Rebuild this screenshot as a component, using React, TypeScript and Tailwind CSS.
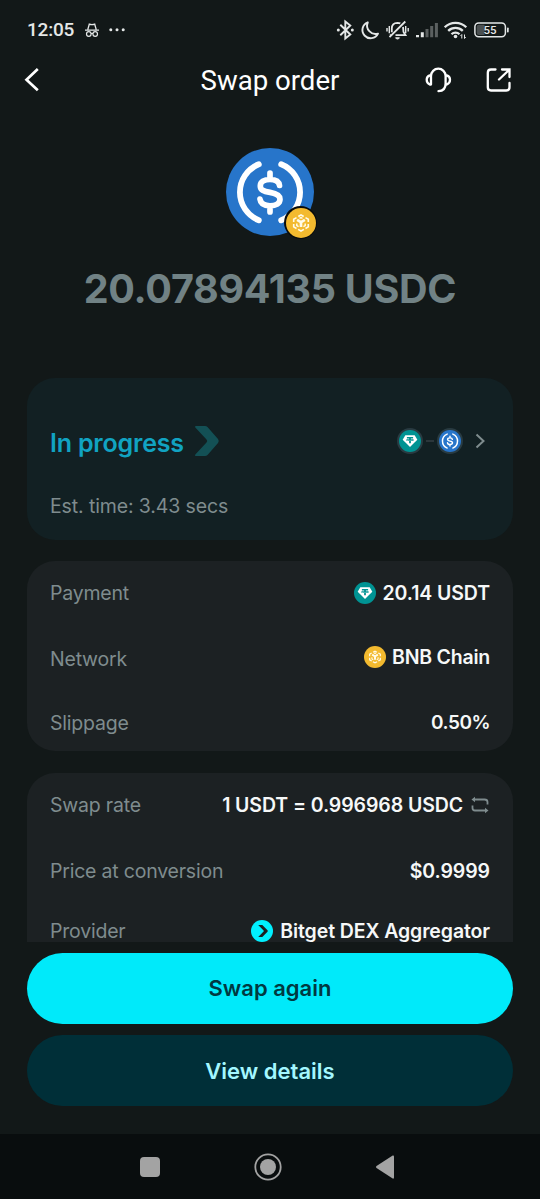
import type { ReactNode } from "react";

function UsdcIcon({ className }: { className: string }) {
  return (
    <svg viewBox="0 0 88 88" className={className} fill="none">
      <circle cx="44" cy="44" r="44" fill="#2775ca" />
      <path
        d="M32.800 16.300A30.200 30.200 0 0 0 32.800 72.300M55.200 16.300A30.200 30.200 0 0 1 55.200 72.300"
        stroke="#fff"
        strokeWidth="5.800"
        strokeLinecap="round"
      />
      <path
        d="M44 25V31M44 58V64M53.500 37.500C53 33.500 49.500 31.500 44 31.500C38 31.500 34.300 33.800 34.300 37.900C34.300 42 37.500 43.300 44 44.400C50.500 45.500 54 47 54 51.300C54 55.500 50 57.800 44 57.800C38 57.800 34.500 55.300 34 51.200"
        stroke="#fff"
        strokeWidth="5.700"
        strokeLinecap="round"
      />
    </svg>
  );
}

function UsdtIcon({ className }: { className: string }) {
  return (
    <svg viewBox="0 0 22 22" className={className}>
      <circle cx="11" cy="11" r="11" fill="#009393" />
      <path d="M6.300 5.200H15.700L18.300 9.800L11 17.100L3.700 9.800Z" fill="#fff" />
      <path d="M7.900 6.900H14.100V8.500H11.900V9C13.700 9.100 15 9.500 15 10S13.700 10.900 11.900 11V13.200H10.100V11C8.300 10.900 7 10.500 7 10S8.300 9.100 10.100 9V8.500H7.900Z" fill="#009393" />
      <path d="M8.200 10C9.500 10.400 12.500 10.400 13.800 10C12.900 9.700 12 9.700 11.900 9.700V10.100H10.100V9.700C10 9.700 9.100 9.700 8.200 10Z" fill="#fff" />
    </svg>
  );
}

function BnbIcon({ className }: { className: string }) {
  return (
    <svg viewBox="0 0 30 30" className={className} fill="none">
      <circle cx="15" cy="15" r="15" fill="#f3ba2f" />
      <path
        d="M12.300 8.500L15 7L17.700 8.500M19.500 9.600L22.300 11.200V14M22.300 16V18.900L19.500 20.500M17.900 21.400L15 23L12.100 21.400M10.500 20.500L7.700 18.900V16M7.700 14V11.200L10.500 9.600"
        stroke="#fffbe9"
        strokeWidth="1.600"
      />
      <path
        d="M11.100 11.900L15 14.200L18.900 11.900M15 14.200V18.900"
        stroke="#fffbe9"
        strokeWidth="2.700"
      />
      <path
        d="M10.800 15.500V17.600L12.600 18.700M19.200 15.500V17.600L17.400 18.700M13.500 10.300L15 9.500L16.500 10.300"
        stroke="#fffbe9"
        strokeWidth="1.500"
      />
    </svg>
  );
}

function BitgetIcon({ className }: { className: string }) {
  return (
    <svg viewBox="0 0 22 22" className={className}>
      <circle cx="11" cy="11" r="11" fill="#00f0ff" />
      <path d="M7.200 5H11.300L16.500 10.300Q17.100 11 16.500 11.700L11.300 17H7.200L12.600 11.500Q13 11 12.600 10.500Z" fill="#1b2023" />
    </svg>
  );
}

function StatusBar() {
  return (
    <div className="flex h-[60px] items-center pl-[27px] text-[#e4e7e7]">
      <span className="w-[58px] font-[Roboto] text-[19px] leading-6 font-medium tracking-[-0.200px] text-[#e4e7e7]">12:05</span>
      <svg viewBox="85 23 14 14" className="h-[14px] w-[14px]" fill="none" stroke="currentColor">
        <path d="M85 30.200H99M87.800 29.500L89.300 24.200Q92 25.200 94.700 24.200L96.200 29.500" strokeWidth="1.300" />
        <circle cx="88.800" cy="34" r="2.300" strokeWidth="1.200" />
        <circle cx="95.200" cy="34" r="2.300" strokeWidth="1.200" />
        <path d="M91 33.500H93" />
      </svg>
      <svg viewBox="108 27 18 6" className="ml-[9px] h-[6px] w-[18px]" fill="currentColor">
        <circle cx="110.800" cy="29.800" r="1.500" />
        <circle cx="117" cy="29.800" r="1.500" />
        <circle cx="123.200" cy="29.800" r="1.500" />
      </svg>
      <svg viewBox="336 19 176 22" className="ml-[210px] h-[22px] w-[176px]" fill="none" stroke="currentColor" strokeWidth="1.900">
        <path d="M340.300 24.800L350.300 34.500L345.300 38.500V21.500L350.300 25.500L340.300 35.200" />
        <circle cx="338.300" cy="30" r="1.500" fill="currentColor" stroke="none" />
        <circle cx="352.300" cy="30" r="1.500" fill="currentColor" stroke="none" />
        <path d="M367.800 22.300A8.200 8.200 0 1 0 378 33.600A8.400 8.400 0 0 1 367.800 22.300Z" strokeLinejoin="round" />
        <path d="M391.800 32.300V28.500C391.800 24.800 394 22.900 397.500 22.800C398.800 22.800 399.600 23 400.300 23.400M403 27C403.300 29 403.300 30.500 403.500 32L405.500 35.200H395.500M405.300 21.500L389.500 37.200M389.800 35.200H391.500" strokeWidth="1.800" />
        <path d="M395.500 37.800H399.500Q398.800 39 397.500 39T395.500 37.800Z" fill="currentColor" strokeWidth="1" />
        <path d="M389.300 26V33.200M387 28V31.500M405.700 26V33.200M408.200 28V31.500" strokeWidth="1.400" />
        <g stroke="none" fill="currentColor">
          <path d="M416 35h3v2.300h-3zM420.800 32.300h3v5h-3z" />
          <path d="M425.500 29h3v8.300h-3zM430.200 26h3v11.300h-3zM434.900 23h3v14.300h-3z" opacity=".35" />
        </g>
        <path d="M444.700 27.200A15.500 15.500 0 0 1 466.300 27.200M448.200 30.900A10.400 10.400 0 0 1 462.800 30.900M451.500 34.200A5.700 5.700 0 0 1 459.500 34.200" strokeWidth="2.300" />
        <circle cx="455.500" cy="36.500" r="1.800" fill="currentColor" stroke="none" />
        <path d="M461.800 38.500V34.500L460.500 35.800M464.500 34.500V38.500L465.800 37.200" strokeWidth="1" />
        <rect x="474.900" y="23" width="30.500" height="13.800" rx="3.800" strokeWidth="1.500" />
        <path d="M479 24.800H484.500V35H479Q476.700 35 476.700 32.700V27Q476.700 24.800 479 24.800Z" fill="#4b5051" stroke="none" />
        <rect x="507" y="27.500" width="1.700" height="5" rx=".8" fill="currentColor" stroke="none" />
        <text x="490" y="34.200" textAnchor="middle" fill="currentColor" stroke="none" fontFamily="Roboto, sans-serif" fontSize="11.500" fontWeight="500">55</text>
      </svg>
    </div>
  );
}

function Header() {
  return (
    <header className="grid h-[42px] grid-cols-[1fr_160px_1fr] items-center pr-[28px] pl-[24px] text-white">
      <svg viewBox="24 67 16 26" className="-mt-[3px] h-[26px] w-[16px]" fill="none" stroke="currentColor" strokeWidth="2.700">
        <path d="M37.800 69L26.500 79.700L37.800 90.300" />
      </svg>
      <h1 className="ml-[4px] text-center font-[Roboto] text-[27.600px] leading-8 font-normal whitespace-nowrap">Swap order</h1>
      <div className="flex items-center justify-end gap-[34px]">
        <svg viewBox="425 66 27 28" className="-mt-[2px] h-[28px] w-[27px]" fill="none" stroke="currentColor" strokeWidth="2.300" strokeLinecap="round">
          <path d="M431 84.500V76A7.300 7.300 0 0 1 445.600 76V83.500Q445.600 91 438.500 91.200M431 75.300H429.800Q426.700 76.300 426.700 79.800T429.800 84.500H431M445.600 75.300H446.800Q450 76.300 450 79.800T446.800 84.500H445.600" />
        </svg>
        <svg viewBox="486 67 26 26" className="-mt-[2px] h-[26px] w-[26px]" fill="none" stroke="currentColor" strokeWidth="2.300" strokeLinecap="round">
          <path d="M495.500 69.500H491Q487.800 69.500 487.800 72.700V87.300Q487.800 90.500 491 90.500H506.300Q509.500 90.500 509.500 87.300V83M502 69.500H509.500V77M509 70L499 79.500" />
        </svg>
      </div>
    </header>
  );
}

function Row({ label, children, className }: { label: string; children: ReactNode; className: string }) {
  return (
    <div className={`flex items-center justify-between leading-6 ${className}`}>
      <span className="text-[19.500px] tracking-[-0.210px] text-[#7f8c8e]">{label}</span>
      <div className="flex items-center text-[19.500px] font-semibold tracking-[-0.100px] text-[#f6f8f8]">{children}</div>
    </div>
  );
}

export default function App() {
  return (
    <main className="flex h-[1199px] w-[540px] flex-col overflow-hidden bg-[#121818] font-[Inter,sans-serif]">
      <StatusBar />
      <Header />

      <section className="flex h-[276px] flex-col items-center pt-[46px]">
        <div className="relative h-[88px] w-[88px]">
          <UsdcIcon className="h-[88px] w-[88px]" />
          <div className="absolute top-[58px] left-[58px] rounded-full bg-[#080b0c] p-[1.500px]">
            <BnbIcon className="h-[30px] w-[30px]" />
          </div>
        </div>
        <p className="mt-[29px] text-[39.500px] leading-[48px] font-bold tracking-[-0.270px] whitespace-nowrap text-[#718285]">20.07894135 USDC</p>
      </section>

      <section className="mx-[27px] h-[162px] shrink-0 rounded-[28px] bg-[#122023] px-[23px] pt-[46px]">
        <div className="flex h-[36px] items-center justify-between">
          <div className="flex items-center">
            <span className="mt-[2px] text-[25px] leading-8 font-semibold tracking-[-0.200px] text-[#11a3c2]">In progress</span>
            <svg viewBox="0 0 26 32" className="-mt-[2px] ml-[10px] h-[32px] w-[26px]" fill="#135055">
              <path d="M2 1H11Q12.500 1 13.500 2L24 14Q25.500 16 24 18L13.500 30Q12.500 31 11 31H2Q.3 31 1.300 29.500L12.500 17.500Q14 16 12.500 14.500L1.300 2.500Q.3 1 2 1Z" />
            </svg>
          </div>
          <div className="-mt-[3px] flex items-center pr-[5px]">
            <span className="rounded-full bg-[#293b42] p-[2px]"><UsdtIcon className="h-[22px] w-[22px]" /></span>
            <span className="mx-[3px] h-[2px] w-[8px] bg-[#2b363b]" />
            <span className="rounded-full bg-[#293b42] p-[2px]"><UsdcIcon className="h-[22px] w-[22px]" /></span>
            <svg viewBox="0 0 10 16" className="ml-[12px] h-[16px] w-[10px]" fill="none" stroke="#7f8c8e" strokeWidth="2"><path d="M1.500 1.500L8.500 8L1.500 14.500" /></svg>
          </div>
        </div>
        <p className="mt-[34px] text-[19.500px] leading-6 tracking-[-0.120px] text-[#7f8c8e]">Est. time: 3.43 secs</p>
      </section>

      <section className="mx-[27px] mt-[21px] h-[190px] shrink-0 rounded-[28px] bg-[#1c2123] px-[23px] pt-[19px]">
        <Row label="Payment" className="h-[26px]">
          <UsdtIcon className="mr-[7px] h-[22px] w-[22px]" />20.14 USDT
        </Row>
        <Row label="Network" className="mt-[40px] h-[26px]">
          <BnbIcon className="-mt-1 mr-[6px] h-[22px] w-[22px]" /><span className="-mt-1 tracking-[-0.220px]">BNB Chain</span>
        </Row>
        <Row label="Slippage" className="mt-[38px] h-[26px]">
          <span className="text-[19px] tracking-[-0.500px]">0.50%</span>
        </Row>
      </section>

      <section className="mx-[27px] mt-[22px] h-[169px] shrink-0 overflow-hidden rounded-t-[28px] bg-[#1c2123] px-[23px] pt-[19px]">
        <Row label="Swap rate" className="h-[26px]">
          1 USDT = 0.996968 USDC
          <svg viewBox="0 0 18 18" className="mr-[1px] ml-[8px] h-[18px] w-[18px]" fill="none" stroke="#7f8c8e" strokeWidth="1.800">
            <path d="M3 3.500H13.500Q16.500 3.500 16.500 6V8.500M1.500 9.500V12Q1.500 14.500 4 14.500H15" />
            <path d="M4 .8V6.200L.5 3.500ZM14 11.800V17.200L17.500 14.500Z" fill="#7f8c8e" stroke="none" />
          </svg>
        </Row>
        <Row label="Price at conversion" className="mt-[40px] h-[26px]">$0.9999</Row>
        <Row label="Provider" className="mt-[34px] h-[26px]">
          <BitgetIcon className="mr-[7px] h-[22px] w-[22px]" />Bitget DEX Aggregator
        </Row>
      </section>

      <div className="mx-[27px] mt-[11px] flex flex-col gap-[11px]">
        <button className="h-[71px] rounded-full bg-[#00eafa] text-[22px] font-semibold text-[#003941]">Swap again</button>
        <button className="h-[71px] rounded-full bg-[#002f38] pt-px text-[22px] font-semibold text-[#a3f7ff]">View details</button>
      </div>

      <nav className="mt-auto flex h-[65px] items-center bg-[#090d0e] pl-[140px]">
        <span className="h-[20px] w-[20px] rounded-[4px] bg-[#a3a3a3]" />
        <svg viewBox="0 0 28 28" className="ml-[94px] h-[28px] w-[28px]" fill="#a3a3a3">
          <circle cx="14" cy="14" r="12.700" fill="none" stroke="#a3a3a3" strokeWidth="1.800" />
          <circle cx="14" cy="14" r="8" />
        </svg>
        <svg viewBox="0 0 20 24" className="ml-[93px] h-[24px] w-[20px]" fill="#a3a3a3">
          <path d="M17.700 .5Q19 0 19 1.500V22.500Q19 24 17.700 23.500L1.500 13Q.3 12 1.500 11Z" />
        </svg>
      </nav>
    </main>
  );
}
